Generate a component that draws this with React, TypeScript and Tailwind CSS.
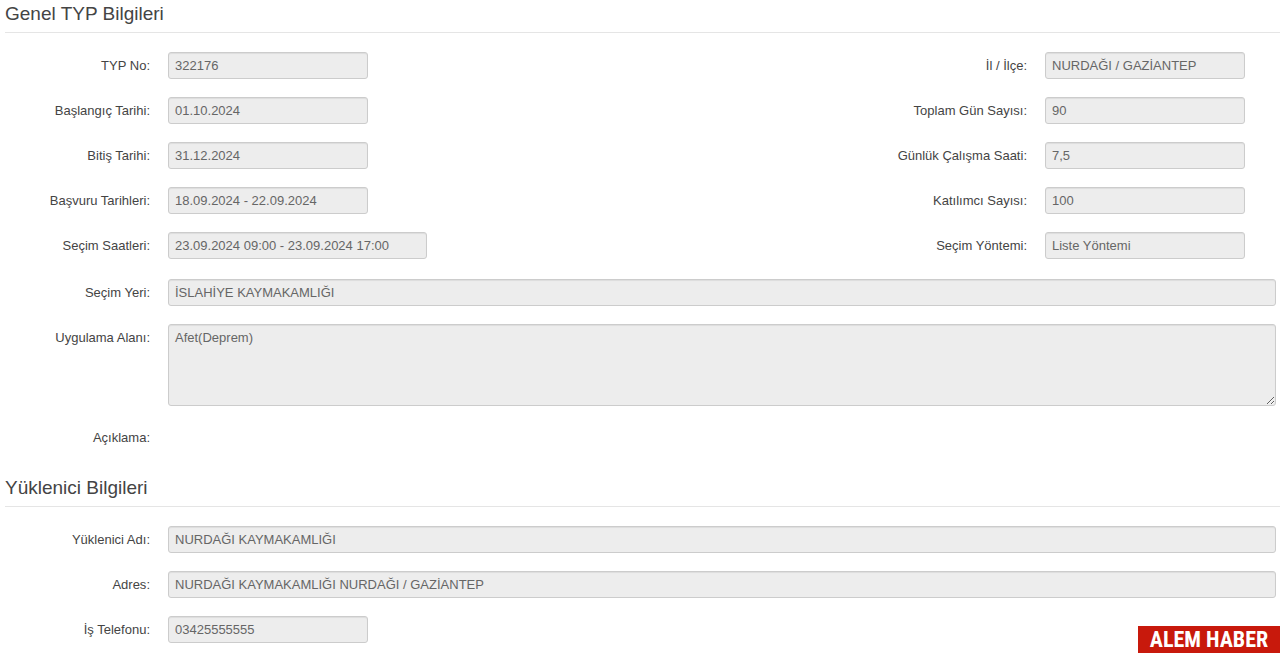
import { useId, type ReactNode } from 'react';
import { clsx } from 'clsx';

type FieldWidth = 'normal' | 'wide' | 'full';

interface FieldProps {
  label: string;
  value: string;
  width?: FieldWidth;
}

const CONTROL =
  'rounded-[3px] border border-[#ccc] bg-[#ededed] px-[6px] text-[13px] leading-5 text-[#666] shadow-[inset_0_1px_1px_rgba(0,0,0,0.07)] outline-none';

const WIDTHS: Record<FieldWidth, string> = {
  normal: 'w-[200px]',
  wide: 'w-[259px]',
  full: 'min-w-0 flex-1',
};

const LEFT_FIELDS: FieldProps[] = [
  { label: 'TYP No', value: '322176' },
  { label: 'Başlangıç Tarihi', value: '01.10.2024' },
  { label: 'Bitiş Tarihi', value: '31.12.2024' },
  { label: 'Başvuru Tarihleri', value: '18.09.2024 - 22.09.2024' },
  { label: 'Seçim Saatleri', value: '23.09.2024 09:00 - 23.09.2024 17:00', width: 'wide' },
];

const RIGHT_FIELDS: FieldProps[] = [
  { label: 'İl / İlçe', value: 'NURDAĞI / GAZİANTEP' },
  { label: 'Toplam Gün Sayısı', value: '90' },
  { label: 'Günlük Çalışma Saati', value: '7,5' },
  { label: 'Katılımcı Sayısı', value: '100' },
  { label: 'Seçim Yöntemi', value: 'Liste Yöntemi' },
];

const CONTRACTOR_FIELDS: FieldProps[] = [
  { label: 'Yüklenici Adı', value: 'NURDAĞI KAYMAKAMLIĞI', width: 'full' },
  { label: 'Adres', value: 'NURDAĞI KAYMAKAMLIĞI NURDAĞI / GAZİANTEP', width: 'full' },
  { label: 'İş Telefonu', value: '03425555555' },
];

function Label({ htmlFor, children }: { htmlFor?: string; children: ReactNode }) {
  const className = 'w-[145px] shrink-0 text-right text-[13px] leading-[27px] text-[#444]';
  if (!htmlFor) return <span className={className}>{children}:</span>;
  return (
    <label htmlFor={htmlFor} className={className}>
      {children}:
    </label>
  );
}

function Field({ label, value, width = 'normal' }: FieldProps) {
  const id = useId();
  return (
    <div className="flex gap-[18px]">
      <Label htmlFor={id}>{label}</Label>
      <input id={id} type="text" readOnly value={value} className={clsx(CONTROL, 'h-[27px]', WIDTHS[width])} />
    </div>
  );
}

function AreaField({ label, value }: FieldProps) {
  const id = useId();
  return (
    <div className="flex gap-[18px]">
      <Label htmlFor={id}>{label}</Label>
      <textarea
        id={id}
        readOnly
        defaultValue={value}
        className={clsx(CONTROL, 'h-[82px] min-w-0 flex-1 resize py-[3px]')}
      />
    </div>
  );
}

function SectionTitle({ children }: { children: ReactNode }) {
  return (
    <h2 className="mb-[19px] h-[33px] border-b border-[#e5e5e5] text-[19px] leading-7 text-[#444]">{children}</h2>
  );
}

export default function App() {
  return (
    <main className="bg-white pl-[5px] font-['Liberation_Sans',Arial,sans-serif]">
      <section>
        <SectionTitle>Genel TYP Bilgileri</SectionTitle>
        <div className="flex justify-between pr-[35px]">
          <div className="flex flex-col gap-[18px]">
            {LEFT_FIELDS.map((field) => (
              <Field key={field.label} {...field} />
            ))}
          </div>
          <div className="flex flex-col gap-[18px]">
            {RIGHT_FIELDS.map((field) => (
              <Field key={field.label} {...field} />
            ))}
          </div>
        </div>
        <div className="mt-5 flex flex-col gap-[18px] pr-1">
          <Field label="Seçim Yeri" value="İSLAHİYE KAYMAKAMLIĞI" width="full" />
          <AreaField label="Uygulama Alanı" value="Afet(Deprem)" />
          <div className="flex">
            <Label>Açıklama</Label>
          </div>
        </div>
      </section>

      <section className="mt-[23px]">
        <SectionTitle>Yüklenici Bilgileri</SectionTitle>
        <div className="flex flex-col gap-[18px] pr-1">
          {CONTRACTOR_FIELDS.map((field) => (
            <Field key={field.label} {...field} />
          ))}
        </div>
      </section>

      {/* Publisher tag pinned to the corner */}
      <div className="fixed right-0 bottom-0 flex h-[27px] w-[142px] items-center justify-center bg-[#c8190c] font-['Roboto_Condensed',Roboto,sans-serif] text-[22px] leading-none font-bold whitespace-nowrap text-white">
        ALEM HABER
      </div>
    </main>
  );
}
